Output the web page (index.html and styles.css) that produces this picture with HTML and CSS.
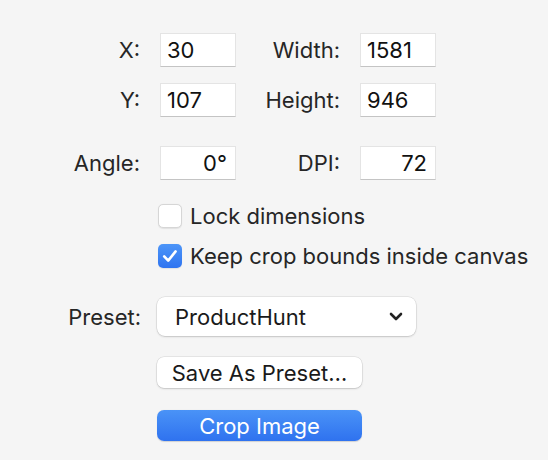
FILE: index.html
```html
<!DOCTYPE html>
<html>
<head>
<meta charset="utf-8">
<link rel="stylesheet" href="styles.css">
</head>
<body>
<main class="panel">
  <section class="fields">
    <label class="lbl">X:</label>
    <div class="field">30</div>
    <label class="lbl">Width:</label>
    <div class="field">1581</div>
    <label class="lbl">Y:</label>
    <div class="field">107</div>
    <label class="lbl">Height:</label>
    <div class="field">946</div>
    <label class="lbl row3">Angle:</label>
    <div class="field right row3">0°</div>
    <label class="lbl row3">DPI:</label>
    <div class="field right row3">72</div>
  </section>

  <section class="checks">
    <div class="check-row">
      <span class="box"></span>
      <span class="check-text">Lock dimensions</span>
    </div>
    <div class="check-row">
      <span class="box checked">
        <svg viewBox="0 0 24 24" width="24" height="24"><path d="M6.2 12.4 L10.2 16.6 L17.6 7.4" fill="none" stroke="#fff" stroke-width="2.6" stroke-linecap="round" stroke-linejoin="round"/></svg>
      </span>
      <span class="check-text">Keep crop bounds inside canvas</span>
    </div>
  </section>

  <section class="preset">
    <label class="lbl preset-lbl">Preset:</label>
    <div class="select">
      <span>ProductHunt</span>
      <svg class="chev" viewBox="0 0 14 9" width="14" height="9"><path d="M2 2 L7 7 L12 2" fill="none" stroke="#222" stroke-width="2.6" stroke-linecap="round" stroke-linejoin="round"/></svg>
    </div>
    <span></span>
    <button class="btn">Save As Preset…</button>
    <span></span>
    <button class="btn primary">Crop Image</button>
  </section>
</main>
</body>
</html>
```

FILE: styles.css
```css
html, body {
  margin: 0;
  padding: 0;
  background: #f5f5f5;
}
body {
  font-family: Inter, "Liberation Sans", sans-serif;
  font-size: 22px;
  color: #262626;
  width: 548px;
  height: 460px;
  overflow: hidden;
}
.panel {
  padding-top: 33px;
}
.fields {
  display: grid;
  grid-template-columns: 120px 76px 84px 76px;
  grid-template-rows: 34px 34px 47px;
  column-gap: 20px;
  row-gap: 16px;
  padding-left: 20px;
}
.lbl {
  display: flex;
  align-items: center;
  justify-content: flex-end;
  white-space: nowrap;
}
.row3 {
  align-self: end;
  height: 34px;
}
.field {
  background: #fff;
  border: 1px solid #e4e4e4;
  border-bottom-color: #c4c4c4;
  box-sizing: border-box;
  display: flex;
  align-items: center;
  padding: 0 6px;
  color: #111;
}
.field.right {
  justify-content: flex-end;
  padding-right: 8px;
}
.checks {
  margin-top: 24px;
  padding-left: 158px;
  display: flex;
  flex-direction: column;
  gap: 16px;
}
.check-row {
  display: flex;
  align-items: center;
  gap: 8px;
  height: 24px;
}
.box {
  width: 24px;
  height: 24px;
  box-sizing: border-box;
  border-radius: 5px;
  background: #fff;
  border: 1px solid #d6d6d6;
  box-shadow: 0 0.5px 1px rgba(0,0,0,0.08);
  display: block;
}
.box.checked {
  border: none;
  background: linear-gradient(#4c95f8, #2f74f0);
}
.box svg { display: block; }
.check-text {
  white-space: nowrap;
}
.preset {
  margin-top: 29px;
  display: grid;
  grid-template-columns: 141px 259px;
  column-gap: 16px;
  row-gap: 21px;
  align-items: center;
}
.preset-lbl {
  height: 39px;
}
.select {
  height: 39px;
  background: #fff;
  border-radius: 8px;
  box-shadow: 0 0 0 0.5px rgba(0,0,0,0.12), 0 1px 2px rgba(0,0,0,0.15);
  display: flex;
  align-items: center;
  justify-content: space-between;
  padding: 0 13px 0 18px;
  color: #1a1a1a;
}
.chev { display: block; }
.btn {
  width: 205px;
  height: 31px;
  font: inherit;
  color: #1a1a1a;
  background: #fff;
  border: none;
  border-radius: 7px;
  box-shadow: 0 0 0 0.5px rgba(0,0,0,0.12), 0 1px 2px rgba(0,0,0,0.15);
  padding: 0;
  justify-self: start;
}
.btn.primary {
  margin-top: 1px;
  color: #fff;
  background: linear-gradient(#4a93f7, #2f72ef);
  box-shadow: 0 0.5px 1px rgba(0,0,0,0.15);
}
```
